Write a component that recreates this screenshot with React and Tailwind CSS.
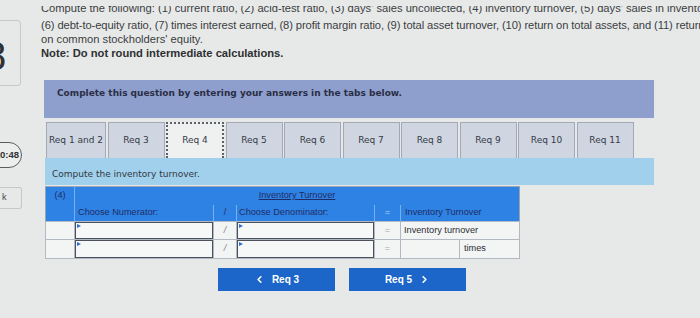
import { ChevronLeft, ChevronRight } from 'lucide-react';

const tabs = ['Req 1 and 2', 'Req 3', 'Req 4', 'Req 5', 'Req 6', 'Req 7', 'Req 8', 'Req 9', 'Req 10', 'Req 11'];

// little blue marker in the top-left corner of a dropdown cell
const Pick = () => (
  <div className="relative h-full border-[1.5px] border-[#4b505c] bg-[#f6f7f7]">
    <span className="absolute top-[1px] left-[1px] w-0 h-0 border-y-[2.5px] border-y-transparent border-l-[4px] border-l-[#2b6cd0]" />
  </div>
);

const Sidebar = () => (
  <div className="w-[41px] shrink-0 flex flex-col">
    <div className="mt-[20px] h-[66px] w-[21px] border-y border-r border-[#c7caca] rounded-r-[4px] flex items-center overflow-hidden">
      <span className="-ml-[16px] mt-[6px] text-[40px] leading-none text-[#2f3133]">8</span>
    </div>
    <div className="mt-[56px] h-[26px] w-[40px] -ml-[18px] rounded-full border-[1.5px] border-[#5a5d60] bg-[#eceeee] flex items-center justify-end pr-[2px] overflow-hidden">
      <span className="text-[9.5px] font-bold text-[#333] whitespace-nowrap">10:48</span>
    </div>
    <div className="mt-[19px] h-[22px] w-[22px] border-y border-r border-[#c5c8c8] rounded-r-[3px] flex items-center pl-[2px]">
      <span className="text-[9px] text-[#444]">k</span>
    </div>
  </div>
);

export default function App() {
  return (
    <div className="w-[700px] h-[318px] overflow-hidden bg-[#e7e9e9] flex font-['Liberation_Sans',Arial,sans-serif]">
      <Sidebar />
      <main className="flex-1 min-w-0 pt-[6px] text-[#3b3d3f]">
        {/* question text, first line cut by the top of the frame */}
        <div className="h-[9px] overflow-hidden flex items-end">
          <div className="text-[11.2px] leading-[14px] whitespace-nowrap">
            Compute the following: (1) current ratio, (2) acid-test ratio, (3) days' sales uncollected, (4) inventory turnover, (5) days' sales in inventory,
          </div>
        </div>
        <div className="mt-[3px] text-[11.2px] leading-[14px] whitespace-nowrap">
          <div className="tracking-[-0.1px]">(6) debt-to-equity ratio, (7) times interest earned, (8) profit margin ratio, (9) total asset turnover, (10) return on total assets, and (11) return</div>
          <div>on common stockholders' equity.</div>
          <div className="font-bold text-[#2e3032]">Note: Do not round intermediate calculations.</div>
        </div>

        <div className="mt-[20px] ml-[3px] w-[610px] h-[38px] bg-[#8e9fcd] pt-[8px] pl-[13px] font-['DejaVu_Sans',sans-serif] font-bold text-[9px] leading-[11px] text-[#2a2e45]">
          Complete this question by entering your answers in the tabs below.
        </div>

        <div className="mt-[4px] ml-[5px] h-[36px] flex gap-[1.5px] font-['DejaVu_Sans',sans-serif] text-[9px] text-[#353a45]">
          {tabs.map((t, i) =>
            t === 'Req 4' ? (
              <div key={t} className="w-[58px] border-2 border-b-0 border-dotted border-[#5c6068] bg-[#eff1f1] flex items-center justify-center">
                {t}
              </div>
            ) : (
              <div
                key={t}
                className={`${i === 0 ? 'w-[60px]' : 'w-[57px]'} border border-b-0 border-[#a2a8b5] bg-[#cfd5e1] flex items-center justify-center`}
              >
                {t}
              </div>
            )
          )}
        </div>

        <div className="ml-[4px] w-[609px] h-[27px] bg-[#a0d0ec] pt-[11px] pl-[7px] font-['DejaVu_Sans',sans-serif] text-[9px] leading-[11px] text-[#33383e]">
          Compute the inventory turnover.
        </div>

        <table className="mt-[1px] ml-[4px] w-[474px] table-fixed border-collapse text-[9.2px] border border-[#9aa3b0]">
          <colgroup>
            <col className="w-[29px]" />
            <col className="w-[139px]" />
            <col className="w-[23px]" />
            <col className="w-[138px]" />
            <col className="w-[26px]" />
            <col className="w-[119px]" />
          </colgroup>
          <tbody>
            <tr className="h-[18px] bg-[#2e82e4] text-[#1f2d66]">
              <td className="border-r border-[#79aef0] text-center">(4)</td>
              <td colSpan={5} className="text-center">
                <span className="underline">Inventory Turnover</span>
              </td>
            </tr>
            <tr className="h-[17px] bg-[#2e82e4] text-[#1f2d66]">
              <td className="border-r border-[#79aef0]" />
              <td className="border-r border-[#79aef0] pl-[3px]">Choose Numerator:</td>
              <td className="border-r border-[#79aef0] text-center">/</td>
              <td className="border-r border-[#79aef0] pl-[2px]">Choose Denominator:</td>
              <td className="border-r border-[#79aef0] text-center text-[#b9d4f5]">=</td>
              <td className="pl-[4px]">Inventory Turnover</td>
            </tr>
            <tr className="h-[18px] bg-[#f3f4f4]">
              <td className="border border-[#b3b9c2]" />
              <td className="border border-[#b3b9c2] p-0 h-[18px]"><Pick /></td>
              <td className="border border-[#b3b9c2] text-center italic text-[#7a7e84]">/</td>
              <td className="border border-[#b3b9c2] p-0 h-[18px]"><Pick /></td>
              <td className="border border-[#b3b9c2] text-center text-[#a3a7ad]">=</td>
              <td className="border border-[#b3b9c2] pl-[3px] text-[#2c2f33]">Inventory turnover</td>
            </tr>
            <tr className="h-[18px] bg-[#f3f4f4]">
              <td className="border border-[#b3b9c2]" />
              <td className="border border-[#b3b9c2] p-0 h-[18px]"><Pick /></td>
              <td className="border border-[#b3b9c2] text-center italic text-[#7a7e84]">/</td>
              <td className="border border-[#b3b9c2] p-0 h-[18px]"><Pick /></td>
              <td className="border border-[#b3b9c2] text-center text-[#a3a7ad]">=</td>
              <td className="border border-[#b3b9c2] p-0">
                <div className="flex h-[18px]">
                  <div className="w-[59px] border-r border-[#b3b9c2]" />
                  <div className="flex-1 flex items-center pl-[4px] text-[#2c2f33]">times</div>
                </div>
              </td>
            </tr>
          </tbody>
        </table>

        <div className="mt-[9px] ml-[177px] flex gap-[14px]">
          <button className="w-[117px] h-[23px] bg-[#1b66c8] text-white font-bold text-[10px] flex items-center justify-center gap-[7px]">
            <ChevronLeft className="w-[11px] h-[11px]" strokeWidth={3.5} />
            Req 3
          </button>
          <button className="w-[117px] h-[23px] bg-[#1b66c8] text-white font-bold text-[10px] flex items-center justify-center gap-[7px]">
            Req 5
            <ChevronRight className="w-[11px] h-[11px]" strokeWidth={3.5} />
          </button>
        </div>
      </main>
    </div>
  );
}
